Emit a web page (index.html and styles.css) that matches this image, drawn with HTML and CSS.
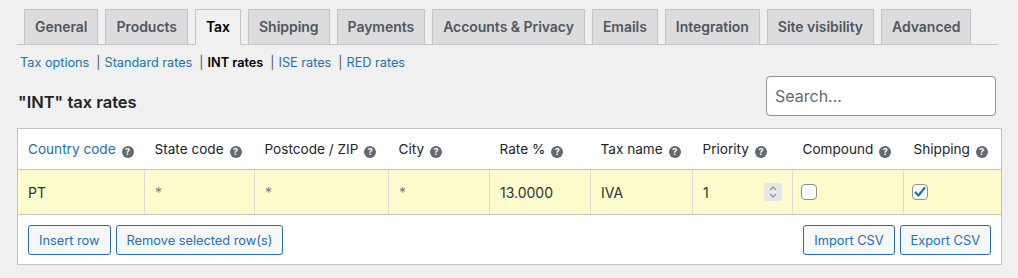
FILE: index.html
```html
<!DOCTYPE html>
<html lang="en">
<head>
    <meta charset="UTF-8">
    <meta name="viewport" content="width=device-width, initial-scale=1.0">
    <title>Tax settings</title>
    <link rel="stylesheet" href="styles.css">
</head>
<body>
    <div class="wrap">
        <nav class="nav-tabs">
            <a class="nav-tab">General</a>
            <a class="nav-tab">Products</a>
            <a class="nav-tab active">Tax</a>
            <a class="nav-tab">Shipping</a>
            <a class="nav-tab">Payments</a>
            <a class="nav-tab">Accounts &amp; Privacy</a>
            <a class="nav-tab">Emails</a>
            <a class="nav-tab">Integration</a>
            <a class="nav-tab">Site visibility</a>
            <a class="nav-tab">Advanced</a>
        </nav>

        <ul class="subsub">
            <li><a>Tax options</a><span class="sep">|</span></li>
            <li><a>Standard rates</a><span class="sep">|</span></li>
            <li><a class="current">INT rates</a><span class="sep">|</span></li>
            <li><a>ISE rates</a><span class="sep">|</span></li>
            <li><a>RED rates</a></li>
        </ul>

        <div class="title-row">
            <h2>"INT" tax rates</h2>
            <input class="search" type="text" placeholder="Search...">
        </div>

        <table class="rates">
            <colgroup>
                <col class="c-country">
                <col class="c-state">
                <col class="c-post">
                <col class="c-city">
                <col class="c-rate">
                <col class="c-name">
                <col class="c-prio">
                <col class="c-comp">
                <col class="c-ship">
            </colgroup>
            <thead>
                <tr>
                    <th><span class="sort">Country code</span><i class="help">?</i></th>
                    <th>State code<i class="help">?</i></th>
                    <th>Postcode / ZIP<i class="help">?</i></th>
                    <th>City<i class="help">?</i></th>
                    <th>Rate %<i class="help">?</i></th>
                    <th>Tax name<i class="help">?</i></th>
                    <th>Priority<i class="help">?</i></th>
                    <th>Compound<i class="help">?</i></th>
                    <th>Shipping<i class="help">?</i></th>
                </tr>
            </thead>
            <tbody>
                <tr class="current">
                    <td>PT</td>
                    <td class="ph">*</td>
                    <td class="ph">*</td>
                    <td class="ph">*</td>
                    <td>13.0000</td>
                    <td>IVA</td>
                    <td>
                        <div class="prio">
                            <span>1</span>
                            <span class="spin">
                                <svg width="10" height="14" viewBox="0 0 10 14"><path d="M2 5 L5 2 L8 5 M2 9 L5 12 L8 9" fill="none" stroke="#8c8f94" stroke-width="1.2"/></svg>
                            </span>
                        </div>
                    </td>
                    <td><span class="check"></span></td>
                    <td>
                        <span class="check on">
                            <svg width="14" height="14" viewBox="0 0 14 14"><path d="M2.5 7.5 L5.5 10.5 L11.5 3" fill="none" stroke="#2271b1" stroke-width="2.2" stroke-linecap="round" stroke-linejoin="round"/></svg>
                        </span>
                    </td>
                </tr>
            </tbody>
            <tfoot>
                <tr>
                    <th colspan="9">
                        <div class="actions">
                            <div class="group">
                                <button class="button">Insert row</button>
                                <button class="button">Remove selected row(s)</button>
                            </div>
                            <div class="group">
                                <button class="button">Import CSV</button>
                                <button class="button">Export CSV</button>
                            </div>
                        </div>
                    </th>
                </tr>
            </tfoot>
        </table>
    </div>
</body>
</html>
```

FILE: styles.css
```css
body {
    margin: 0;
    background: #f0f0f1;
    font-family: Inter, Roboto, "Liberation Sans", sans-serif;
    color: #2c3338;
    font-size: 13px;
}

.wrap {
    padding: 0 17px;
}

.nav-tabs {
    display: flex;
    padding-top: 9px;
    margin-right: 3px;
    border-bottom: 1px solid #c3c4c7;
}

.nav-tab {
    margin-left: 7px;
    margin-bottom: -1px;
    padding: 5px 10px;
    line-height: 24px;
    font-size: 14px;
    font-weight: 600;
    letter-spacing: -0.04px;
    color: #50575e;
    background: #dcdcde;
    border: 1px solid #c3c4c7;
}

.nav-tab.active {
    background: #f0f0f1;
    color: #000;
    border-bottom-color: #f0f0f1;
}

.subsub {
    list-style: none;
    display: flex;
    margin: 11px 0 0 3px;
    padding: 0;
    font-size: 12.7px;
    line-height: 14px;
}

.subsub a {
    color: #2271b1;
}

.subsub a.current {
    color: #000;
    font-weight: 600;
}

.sep {
    color: #50575e;
    margin: 0 4px 0 7px;
}

.title-row {
    display: flex;
    justify-content: space-between;
    align-items: flex-start;
    margin-top: 6px;
}

.title-row h2 {
    margin: 15px 0 0 1px;
    font-size: 16.5px;
    line-height: 22px;
    font-weight: 600;
    color: #1d2327;
}

.search {
    width: 230px;
    height: 40px;
    box-sizing: border-box;
    margin-right: 5px;
    padding: 0 8px;
    font-family: inherit;
    font-size: 16px;
    color: #2c3338;
    border: 1px solid #8c8f94;
    border-radius: 4px;
    background: #fff;
}

.search::placeholder {
    color: #646970;
}

.rates {
    width: 100%;
    margin-top: 12px;
    table-layout: fixed;
    border-collapse: collapse;
    background: #fff;
    border: 1px solid #c3c4c7;
}

.c-country { width: 127px; }
.c-state { width: 110px; }
.c-post { width: 134px; }
.c-city { width: 101px; }
.c-rate { width: 101px; }
.c-name { width: 102px; }
.c-prio { width: 100px; }
.c-comp { width: 111px; }
.c-ship { width: 98px; }

.rates thead th {
    height: 39px;
    padding: 1px 0 0 10px;
    text-align: left;
    font-weight: 400;
    font-size: 13.6px;
    color: #1d2327;
    white-space: nowrap;
    border-bottom: 1px solid #c3c4c7;
}

.sort {
    color: #2271b1;
}

.help {
    display: inline-block;
    width: 12px;
    height: 12px;
    margin-left: 6px;
    border-radius: 50%;
    background: #646970;
    color: #fff;
    font-style: normal;
    font-weight: 700;
    font-size: 9px;
    line-height: 12px;
    text-align: center;
    vertical-align: -1px;
}

.rates tbody td {
    height: 44px;
    padding: 0 10px;
    font-size: 14px;
    color: #2c3338;
    background: #fefbcc;
    border-right: 1px solid #dcdcde;
    border-bottom: 1px solid #c3c4c7;
}

.rates tbody td:last-child {
    border-right: none;
}

.rates tbody td.ph {
    color: #787c82;
}

.prio {
    display: flex;
    justify-content: space-between;
    align-items: center;
}

.spin {
    display: flex;
    align-items: center;
    justify-content: center;
    width: 18px;
    height: 18px;
    background: #e5e5ea;
    border-radius: 2px;
}

.check {
    display: flex;
    align-items: center;
    justify-content: center;
    width: 16px;
    height: 16px;
    box-sizing: border-box;
    margin-left: -2px;
    border: 1px solid #8c8f94;
    border-radius: 4px;
    background: #fff;
}

.rates tfoot th {
    padding: 10px 10px 9px;
    font-weight: 400;
}

.actions {
    display: flex;
    justify-content: space-between;
}

.group {
    display: flex;
    gap: 5px;
}

.button {
    height: 30px;
    padding: 0 10px;
    font-family: inherit;
    font-size: 12.8px;
    color: #2271b1;
    background: #f6f7f7;
    border: 1px solid #2271b1;
    border-radius: 3px;
}
```
